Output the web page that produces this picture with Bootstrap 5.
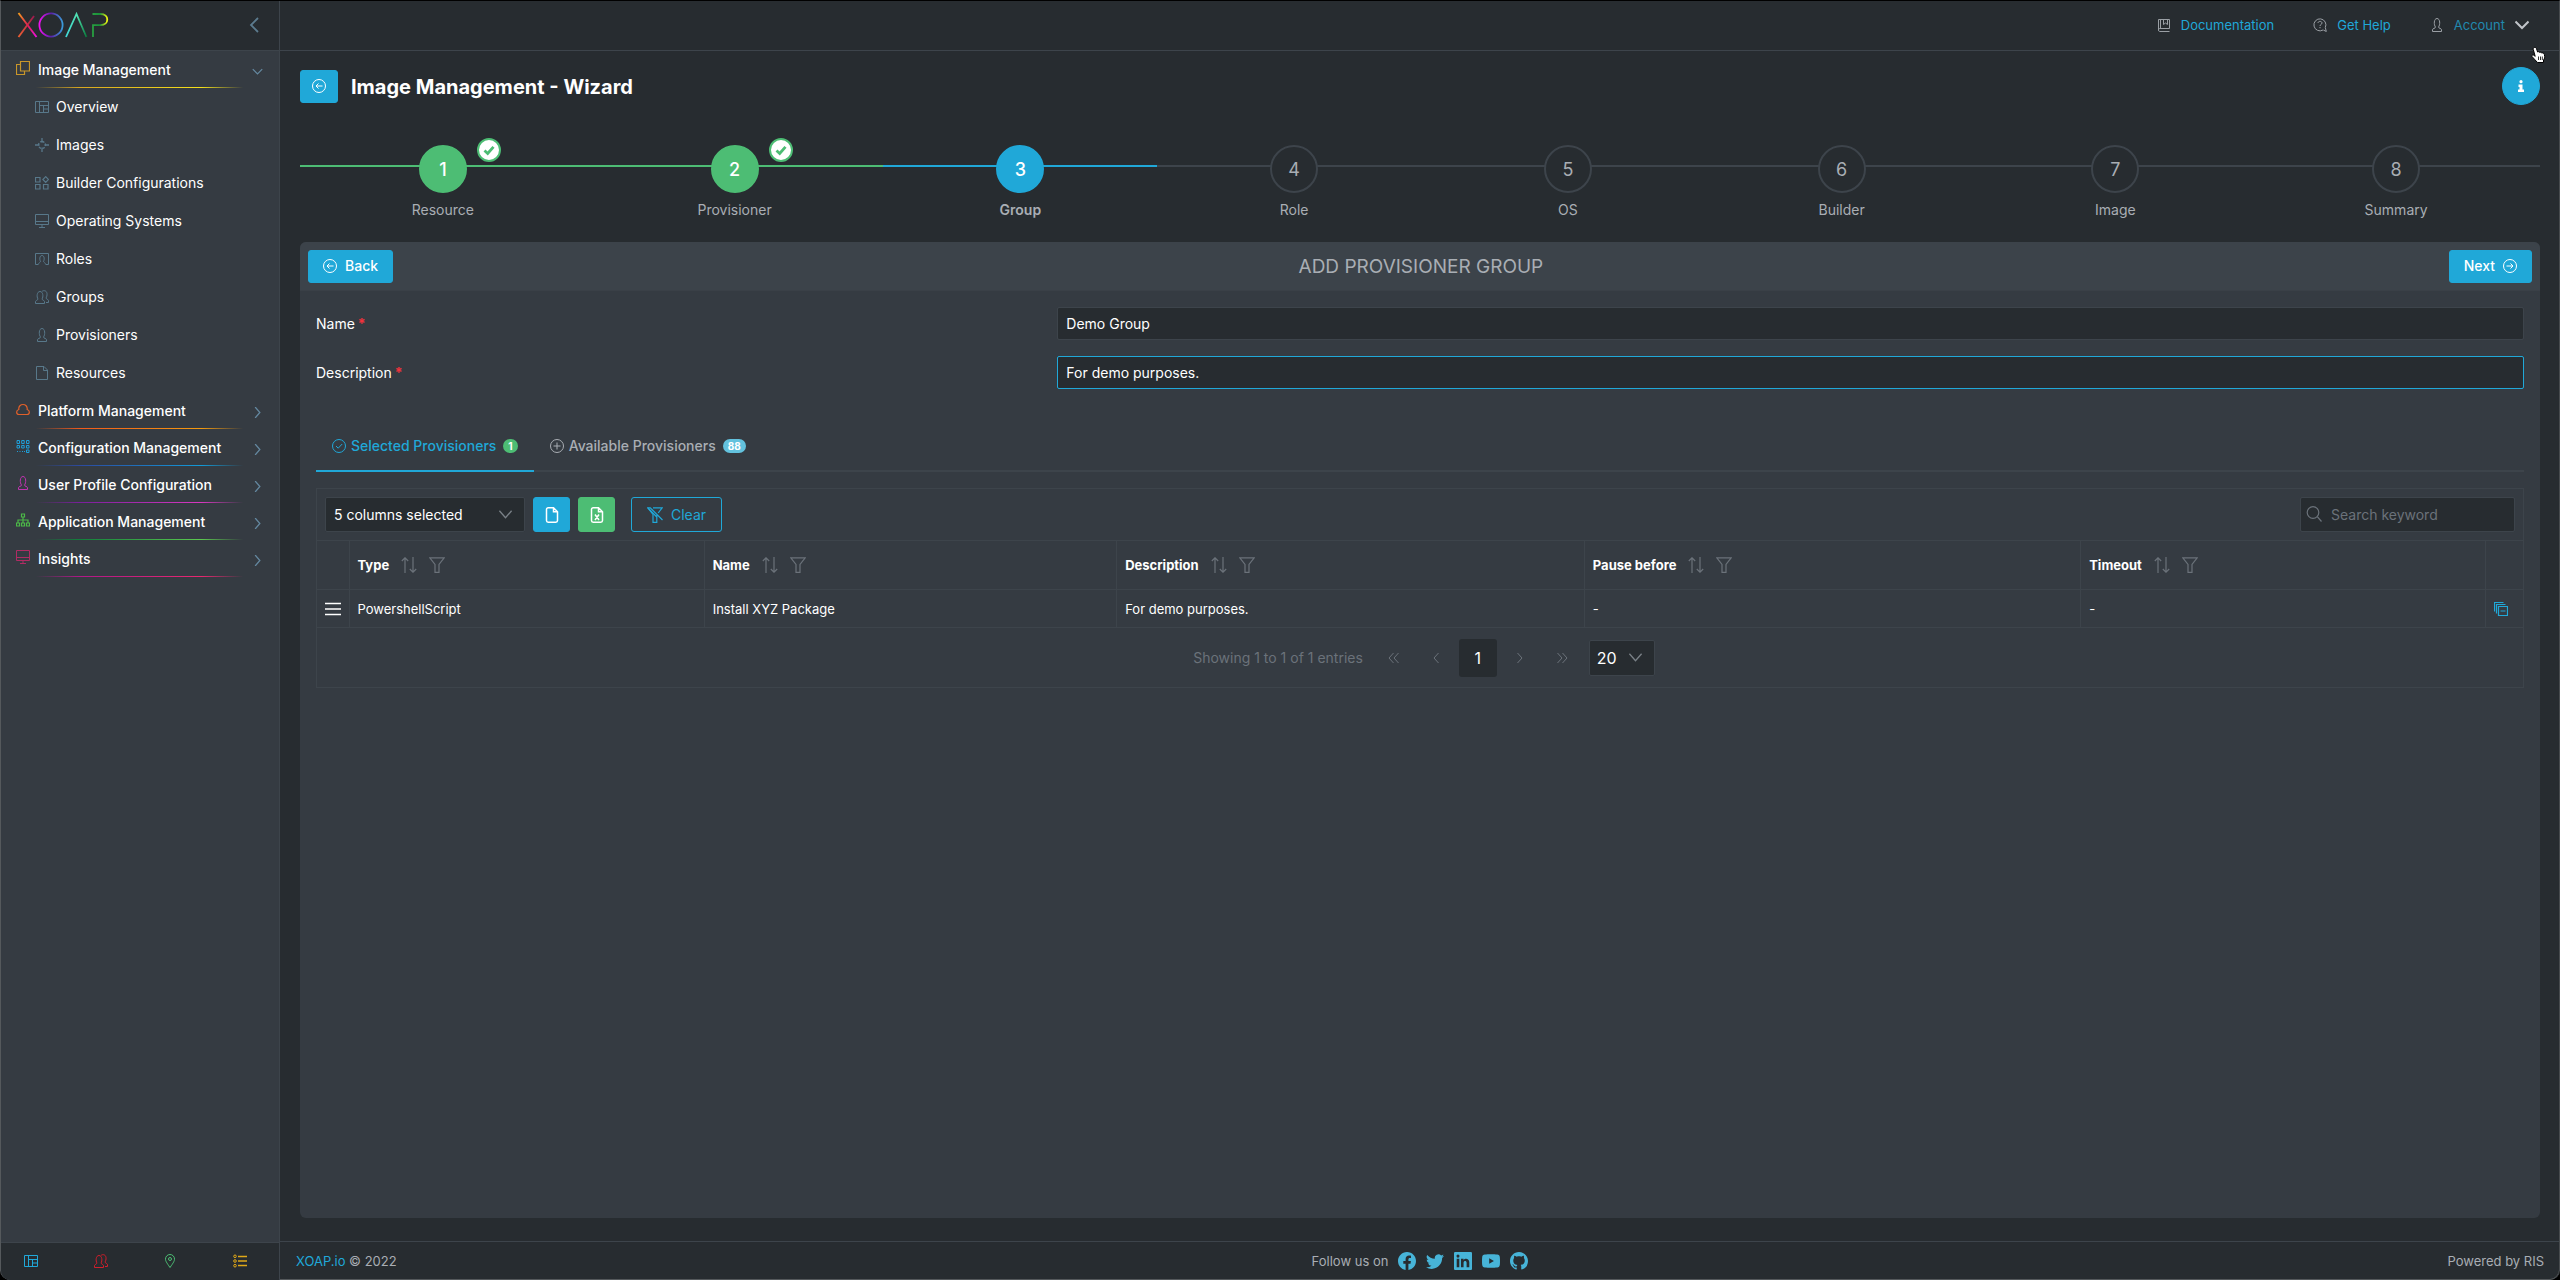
<!DOCTYPE html>
<html lang="en">
<head>
<meta charset="utf-8">
<meta name="viewport" content="width=device-width, initial-scale=1">
<title>Image Management - Wizard</title>
<link rel="stylesheet" href="https://cdn.jsdelivr.net/npm/bootstrap@5.3.0/dist/css/bootstrap.min.css">
<style>
:root{--page:#272c30;--panel:#353b42;--line:#3d444b;--accent:#20a8d8;--ok:#4dbd74;--muted:#a9aeb4;--dim:#6b727a;--navicon:#58788a}
body{background:#000;color:#fff;font-family:Inter,"Liberation Sans",sans-serif;font-size:14px;line-height:20px}
a{color:var(--accent);text-decoration:none}
svg{display:block;flex:none}
.glyph{width:14px;height:14px;fill:none;stroke:currentColor;stroke-width:1}
.glyph-lg{width:16px;height:16px;stroke-width:1.2}
.frame{min-height:100vh;background:var(--page);border-top:1px solid #000;border-left:1px solid #55595c;border-right:1px solid #474b4e;border-radius:0 0 10px 10px;box-shadow:inset 0 -1px 0 #55595c;overflow:hidden}
.side{width:279px;background:var(--panel);border-right:1px solid var(--line)}
.side-top,.topbar{height:50px;border-bottom:1px solid var(--line)}
.side-top{background:var(--page);padding:0 20px 2px 16px}
.side-toggle{color:#5c7b8e;background:none;border:0;padding:0}
.side-group{height:37px;padding:0 16px 0 15px;font-weight:500;color:#fff;position:relative}
.side-group::after{content:"";position:absolute;left:15px;right:16px;bottom:0;height:1px;background:linear-gradient(90deg,transparent,transparent 8%,var(--c1) 26%,var(--c2) 75%,transparent 92%)}
.side-group .glyph:first-child{margin:0 8px 3px 0}
.side-group .arrow{margin:3px 0 0 auto;color:#6488a0;width:11px;height:11px;stroke-width:1.6}
.side-link{height:38px;padding-left:34px;gap:7px;color:#fff}
.side-link .glyph{color:var(--navicon)}
.side-foot{height:38px;background:var(--page);border-top:1px solid var(--line);padding:0 32px 2px 23px}
.topbar{padding:0 30px 2px 0;gap:39px}
.topbar a{font-size:13px;gap:10px}
.topbar .glyph{color:#9a9fa4}
.content{padding:16px 19px 23px 20px}
.btn{--bs-btn-font-size:14px;--bs-btn-line-height:20px;--bs-btn-border-radius:3px;--bs-btn-font-weight:500}
.btn-accent{--bs-btn-color:#fff;--bs-btn-bg:var(--accent);--bs-btn-border-color:var(--accent);--bs-btn-hover-bg:#1b8eb7;--bs-btn-hover-color:#fff}
.btn-ok{--bs-btn-color:#fff;--bs-btn-bg:var(--ok);--bs-btn-border-color:var(--ok);--bs-btn-hover-bg:#3ea662;--bs-btn-hover-color:#fff}
.btn-line{--bs-btn-color:var(--accent);--bs-btn-border-color:var(--accent);--bs-btn-font-weight:400;--bs-btn-hover-color:#fff;--bs-btn-hover-bg:var(--accent);height:35px;padding:0 15px}
.btn-square{width:38px;height:33px;padding:0}
.btn-tool{width:37px;height:35px;padding:0}
.btn-step{height:33px;padding:0 14px}
.page-title{font-size:20px;line-height:24px;font-weight:700;margin:2px 0 0;padding-left:13px}
.info-btn{width:38px;height:38px;padding:0;border-radius:50%}
.stepper{margin:40px 0 23px;padding:0;list-style:none}
.stepper li{position:relative;flex:274 1 0;color:var(--muted);--track:var(--line)}
.stepper li:nth-child(1){flex-grow:286}
.stepper li:nth-child(2){flex-grow:298}
.stepper li:last-child{flex-grow:288}
.stepper li::before{content:"";position:absolute;left:0;right:0;top:20px;height:2px;background:var(--track)}
.step-dot{position:relative;width:48px;height:48px;padding-top:2px;border-radius:50%;border:2px solid var(--track);background:var(--page);font-size:18px}
.step-done{--track:var(--ok)!important}
.step-now{--track:var(--accent)!important;font-weight:600}
.step-done .step-dot,.step-now .step-dot{background:var(--track);color:#fff;font-weight:500}
.step-name{margin-top:8px;line-height:18px}
.step-check{position:absolute;left:calc(50% + 34px);top:-7px;width:24px;height:24px;border-radius:50%;background:#fff;border:2px solid var(--ok);color:var(--ok)}
.wizard{background:var(--panel);border-radius:6px;overflow:hidden}
.wizard-head{height:49px;padding:0 8px;background:#3c434a;border-bottom:1px solid #3a4047}
.wizard-head h2{font-size:19px;line-height:24px;font-weight:400;color:var(--muted);margin:2px 0 0}
.wizard-body{padding:16px}
.field-row{margin-bottom:16px}
.req{color:#f0323c;margin-left:3px;font-weight:700}
.form-control,.form-select,.form-control:focus{background-color:var(--page);color:#fff;border:1px solid var(--line);border-radius:2px;font-size:14px;line-height:20px;box-shadow:none}
.field-row .form-control{height:33px;padding:0 8px}
.field-row .is-current{border-color:var(--accent)}
.form-select{background-image:url("data:image/svg+xml,%3Csvg xmlns='http://www.w3.org/2000/svg' viewBox='0 0 16 16'%3E%3Cpath fill='none' stroke='%237a8187' stroke-width='1.4' d='M1.5 4 8 11.5 14.5 4'/%3E%3C/svg%3E")}
.tabs{margin-top:31px;border-bottom:2px solid var(--line)}
.tabs .nav-link{display:flex;align-items:center;gap:5px;height:52px;margin-bottom:-2px;padding:2px 16px 0;border:0;border-bottom:2px solid transparent;border-radius:0;color:var(--muted);font-weight:500;line-height:20px}
.tabs .nav-link.active{background:none;color:var(--accent);border-color:var(--accent)}
.tabs .badge{font-size:10px;line-height:14px;padding:0 5px;margin-left:2px}
.bg-ok{background:var(--ok)}
.bg-sky{background:#63c2de}
.grid-box{margin-top:16px;border:1px solid var(--line)}
.grid-tools{padding:8px}
.pick-cols{width:200px;height:35px;padding:0 8px;background-position:right 11px center;background-size:15px 15px}
.find-box{width:215px;height:35px}
.find-box svg{position:absolute;left:6px;top:9px;color:var(--dim)}
.find-box .form-control{height:35px;padding:0 8px 0 30px}
.find-box .form-control::placeholder{color:var(--dim)}
.grid-table{--bs-table-bg:transparent;--bs-table-color:#fff;table-layout:fixed;margin:0;font-size:13px;border-color:var(--line)}
.grid-table th,.grid-table td{padding:0 8px;vertical-align:middle;border:1px solid var(--line);line-height:18px}
.grid-table tr>:first-child{border-left:0}
.grid-table tr>:last-child{border-right:0}
.grid-table th{height:49px;font-weight:700}
.grid-table td{height:38px}
.grid-table th .glyph-lg{color:var(--dim)}
.c-handle{width:32px}.c-type{width:16.1%}.c-name{width:18.7%}.c-desc{width:21.2%}.c-pause{width:22.5%}.c-act{width:38px}
.pager{height:59px;padding-left:8px;color:var(--dim)}
.pager button{width:38px;height:38px;border:0;border-radius:3px;background:none;color:var(--dim);padding:0}
.pager .here{background:var(--page);color:#fff;font-size:16px}
.pick-size{width:66px;height:36px;padding:0 7px;font-size:16px!important;background-position:right 11px center;background-size:15px 15px}
.foot{height:39px;border-top:1px solid var(--line);padding:0 15px 0 16px;color:var(--muted);font-size:13px}
.follow,.social-list{gap:10px}
.social{width:18px;height:18px;fill:#47b4d8}
.pointer{position:absolute;right:13px;top:45px;z-index:5}
</style>
<script src="https://cdn.jsdelivr.net/npm/bootstrap@5.3.0/dist/js/bootstrap.bundle.min.js"></script>
</head>
<body>
<svg class="d-none" aria-hidden="true">
  <symbol id="i-copy" viewBox="0 0 14 14"><path d="M4.5.5h9v9.500h-9zM4.500 3.500h-4v10h8V10" stroke-width="1.200"/></symbol>
  <symbol id="i-board" viewBox="0 0 14 14"><path d="M.5 1.500h13v11H.5zM4.500 1.500v11M4.500 5.500h9M8.500 5.500v7M8.500 9h5"/></symbol>
  <symbol id="i-target" viewBox="0 0 14 14"><path d="M7 0v4.500M7 9.500V14M0 7h4.500M9.500 7H14" stroke-width="1.300"/><path stroke-width="1.300" stroke-dasharray="2.500 1.400" d="M7 3.500A3.500 3.500 0 1 1 7 10.500 3.500 3.500 0 1 1 7 3.500"/></symbol>
  <symbol id="i-blocks" viewBox="0 0 14 14"><path d="M.5 1.500h4.500V6H.5zM.5 8.500h4.500V13H.5zM8.500 8.500H13V13H8.500zM10.700.7l2.800 2.800-2.800 2.800-2.800-2.800z" stroke-width="1.200"/></symbol>
  <symbol id="i-screen" viewBox="0 0 14 14"><path d="M.5.500h13v10H.5zM.5 7.500h13M7 10.500v3M4 13.500h6"/></symbol>
  <symbol id="i-role" viewBox="0 0 14 14"><path d="M3 12.500H.5v-11h13v11H11M3.500 12.500c0-2 2-2 2-3.200C4.500 8 4.300 3.500 7 3.500s2.500 4.500 1.500 5.800c0 1.200 2 1.200 2 3.200"/></symbol>
  <symbol id="i-group" viewBox="0 0 14 14"><path d="M.5 13.500v-2c0-1 2.500-1.500 2.500-2.500C1.500 7 1.800 1.500 5 1.500S8.500 7 7 9c0 1 2.500 1.500 2.500 2.500v2zM7 1.500C8 .3 11.500 0 12 3.500c.2 2-.3 3.500-1 4.500 0 1 2.500 1.500 2.500 2.500v2H11"/></symbol>
  <symbol id="i-person" viewBox="0 0 14 14"><path d="M2.500 13.500v-2c0-1 3-1 3-2.500C3.700 7 3.700.5 7 .5S10.300 7 8.500 9c0 1.500 3 1.500 3 2.500v2z"/></symbol>
  <symbol id="i-file" viewBox="0 0 14 14"><path d="M1.500.5h7.500l3.500 3.500v9.500h-11zM8.500.5v4h4"/></symbol>
  <symbol id="i-cloud" viewBox="0 0 14 14"><path d="M3 12.500C.2 12.500-.3 8.500 2.800 7.500 2 .8 12 .8 11.200 7.500c3.100 1 2.600 5-.2 5z" stroke-width="1.200"/></symbol>
  <symbol id="i-dots" viewBox="0 0 14 14"><path d="M1 1.500h2.500v3H1zM5.700 1.500h2.500v3H5.700zM10.500 1.500H13v3h-2.500zM1 6.500h2.500v2.500H1zM5.700 6.500h2.500v2.500H5.700zM10.500 6.500H13v2.500h-2.500zM10.500 11H13v2.500h-2.500zM1 12.500h1M3.500 12.500h1M6 12.500h1M8 12.500h1"/></symbol>
  <symbol id="i-tree" viewBox="0 0 14 14"><path d="M5.500 1h3v3h-3zM.5 10h3v3h-3zM5.500 10h3v3h-3zM10.500 10h3v3h-3zM7 4v6M2 10V7h10v3" stroke-width="1.200"/></symbol>
  <symbol id="i-pin" viewBox="0 0 14 14"><path d="M7 13.500C3.500 8.500 2.500 7 2.500 5a4.500 4.500 0 0 1 9 0c0 2-1 3.500-4.500 8.500z"/><circle cx="7" cy="5" r="1.500"/></symbol>
  <symbol id="i-list" viewBox="0 0 14 14"><path d="M5 2.500h9M5 7h9M5 11.500h9" stroke-width="1.600"/><circle cx="2" cy="2.300" r="1.300"/><circle cx="2" cy="7" r="1.300"/><circle cx="2" cy="11.700" r="1.300"/></symbol>
  <symbol id="i-down" viewBox="0 0 14 14"><path d="M1 4l6 6 6-6"/></symbol>
  <symbol id="i-right" viewBox="0 0 14 14"><path d="M4 0l6 7-6 7"/></symbol>
  <symbol id="i-book" viewBox="0 0 14 14"><path d="M1.500 12V1.500h11v9h-10c-1.300 0-1.300 3 0 3h10M3.500 1.500v9M6.500 1.500v5L8.500 5l2 1.500v-5"/></symbol>
  <symbol id="i-help" viewBox="0 0 14 14"><path d="M10 12A6 6 0 1 1 12.300 9.500l1 4-3-1.500M5 5c0-2.200 4-2.200 4 0 0 1.500-2 1.300-2 3M7 9v1.200"/></symbol>
  <symbol id="i-left-circle" viewBox="0 0 14 14"><circle cx="7" cy="7" r="6.500"/><path d="M10.500 7H4M6.500 4.500 4 7l2.500 2.500"/></symbol>
  <symbol id="i-right-circle" viewBox="0 0 14 14"><circle cx="7" cy="7" r="6.500"/><path d="M3.500 7H10M7.500 4.500 10 7 7.500 9.500"/></symbol>
  <symbol id="i-check-circle" viewBox="0 0 14 14"><circle cx="7" cy="7" r="6.500"/><path d="M4 7l2.200 2.200L10.200 5"/></symbol>
  <symbol id="i-plus-circle" viewBox="0 0 14 14"><circle cx="7" cy="7" r="6.500"/><path d="M7 3.500v7M3.500 7h7"/></symbol>
  <symbol id="i-sheet" viewBox="0 0 16 16"><path d="M4.200.8h5.300l4 4v8.700a1.700 1.700 0 0 1-1.700 1.700H4.200a1.700 1.700 0 0 1-1.700-1.700v-11A1.700 1.700 0 0 1 4.200.8zM9.500.8v4h4" stroke-width="1.500"/></symbol>
  <symbol id="i-sheet-x" viewBox="0 0 16 16"><path d="M4.200.8h5.300l4 4v8.700a1.700 1.700 0 0 1-1.700 1.700H4.200a1.700 1.700 0 0 1-1.700-1.700v-11A1.700 1.700 0 0 1 4.200.8zM9.500.8v4h4M6 7.500l4 5.500M10 7.500 6 13" stroke-width="1.500"/></symbol>
  <symbol id="i-filter" viewBox="0 0 16 16"><path d="M.8.8h14.400L10 7.500v7.800H6V7.500z"/></symbol>
  <symbol id="i-nofilter" viewBox="0 0 16 16"><path d="M6 .8h9.200L11.200 6M9.800 8v7.300H6V7.500L.8.800h2.500L15.500 13"/><path d="M.8.8 9.800 10"/></symbol>
  <symbol id="i-sort" viewBox="0 0 16 16"><path d="M4 16V.8M.8 4 4 .8 7.200 4M12 0v15.200M8.800 12l3.200 3.200 3.200-3.200"/></symbol>
  <symbol id="i-search" viewBox="0 0 16 16"><circle cx="7" cy="6.500" r="5.800"/><path d="m11.300 10.700 4.200 4.800"/></symbol>
  <symbol id="i-bars" viewBox="0 0 16 16"><path d="M0 2.500h16M0 8h16M0 13.500h16" stroke-width="1.600"/></symbol>
  <symbol id="i-remove" viewBox="0 0 14 14"><path d="M4.500 4.500h9v9h-9zM2.500 11.500v-9h9M.5 9.500v-9h9M6.500 9h5" stroke-width="1.200"/></symbol>
  <symbol id="i-first" viewBox="0 0 14 14"><path d="M6.500 2 2 7l4.500 5M11.500 2 7 7l4.500 5"/></symbol>
  <symbol id="i-prev" viewBox="0 0 14 14"><path d="M9.500 2 5 7l4.500 5"/></symbol>
  <symbol id="i-next" viewBox="0 0 14 14"><path d="M4.500 2 9 7l-4.500 5"/></symbol>
  <symbol id="i-last" viewBox="0 0 14 14"><path d="M2.500 2 7 7l-4.500 5M7.500 2l4.500 5-4.500 5"/></symbol>
  <symbol id="i-tick" viewBox="0 0 14 14"><path d="M2.500 7.500 5.700 10.500 11.500 3.800" stroke-width="2.800"/></symbol>
</svg>
<div class="frame d-flex position-relative">
  <aside class="side d-flex flex-column flex-shrink-0">
    <div class="side-top d-flex align-items-center justify-content-between">
      <a href="#" aria-label="XOAP">
        <svg width="94" height="26" viewBox="0 0 94 26" fill="none" stroke-width="1.800">
          <defs>
            <linearGradient id="gx" gradientUnits="userSpaceOnUse" x1="1" y1="1" x2="19" y2="25"><stop stop-color="#f6a21c"/><stop offset=".5" stop-color="#e02050"/><stop offset="1" stop-color="#f010e0"/></linearGradient>
            <linearGradient id="gx2" gradientUnits="userSpaceOnUse" x1="17" y1="4" x2="1" y2="25"><stop stop-color="#a01850"/><stop offset="1" stop-color="#f06030"/></linearGradient>
            <linearGradient id="go"><stop stop-color="#f010f0"/><stop offset=".5" stop-color="#5a20a8"/><stop offset="1" stop-color="#3a9ad8"/></linearGradient>
            <linearGradient id="ga"><stop stop-color="#40d8d8"/><stop offset=".55" stop-color="#50e0b0"/><stop offset="1" stop-color="#08783a"/></linearGradient>
            <linearGradient id="gp"><stop stop-color="#28a040"/><stop offset=".5" stop-color="#18903a"/><stop offset="1" stop-color="#f0f810"/></linearGradient>
          </defs>
          <path stroke="url(#gx2)" d="M17 4 1.500 25"/><path stroke="url(#gx)" d="M1.500 1 19.500 25"/>
          <circle cx="34" cy="13" r="11.600" stroke="url(#go)"/>
          <path stroke="url(#ga)" d="M49 25 59.500 2l10 23"/>
          <path stroke="url(#gp)" d="M75.500 2h8c9 0 9 11 0 11.100h-7.500V25"/>
        </svg>
      </a>
      <button class="side-toggle" type="button" aria-label="Collapse sidebar"><svg width="10" height="16" viewBox="0 0 10 16" fill="none" stroke="currentColor" stroke-width="1.800"><path d="M9 1 2 8l7 7"/></svg></button>
    </div>
    <nav>
      <a href="#" class="side-group d-flex align-items-center" style="--c1:#d8a820;--c2:#f4e01c"><svg class="glyph" color="#c8962a"><use href="#i-copy"/></svg>Image Management<svg class="glyph arrow"><use href="#i-down"/></svg></a>
      <a href="#" class="side-link d-flex align-items-center"><svg class="glyph"><use href="#i-board"/></svg>Overview</a>
      <a href="#" class="side-link d-flex align-items-center"><svg class="glyph"><use href="#i-target"/></svg>Images</a>
      <a href="#" class="side-link d-flex align-items-center"><svg class="glyph"><use href="#i-blocks"/></svg>Builder Configurations</a>
      <a href="#" class="side-link d-flex align-items-center"><svg class="glyph"><use href="#i-screen"/></svg>Operating Systems</a>
      <a href="#" class="side-link d-flex align-items-center"><svg class="glyph"><use href="#i-role"/></svg>Roles</a>
      <a href="#" class="side-link d-flex align-items-center"><svg class="glyph"><use href="#i-group"/></svg>Groups</a>
      <a href="#" class="side-link d-flex align-items-center"><svg class="glyph"><use href="#i-person"/></svg>Provisioners</a>
      <a href="#" class="side-link d-flex align-items-center"><svg class="glyph"><use href="#i-file"/></svg>Resources</a>
      <a href="#" class="side-group d-flex align-items-center" style="--c1:#f05a1c;--c2:#f39a10"><svg class="glyph" color="#e0602a"><use href="#i-cloud"/></svg>Platform Management<svg class="glyph arrow"><use href="#i-right"/></svg></a>
      <a href="#" class="side-group d-flex align-items-center" style="--c1:#2c4aa0;--c2:#129ad8"><svg class="glyph" color="#1f9fd8"><use href="#i-dots"/></svg>Configuration Management<svg class="glyph arrow"><use href="#i-right"/></svg></a>
      <a href="#" class="side-group d-flex align-items-center" style="--c1:#7a1f9c;--c2:#d838c0"><svg class="glyph" color="#c034b0"><use href="#i-person"/></svg>User Profile Configuration<svg class="glyph arrow"><use href="#i-right"/></svg></a>
      <a href="#" class="side-group d-flex align-items-center" style="--c1:#12803c;--c2:#5cc850"><svg class="glyph" color="#4cb848"><use href="#i-tree"/></svg>Application Management<svg class="glyph arrow"><use href="#i-right"/></svg></a>
      <a href="#" class="side-group d-flex align-items-center" style="--c1:#b01888;--c2:#e82870"><svg class="glyph" color="#b02c64"><use href="#i-screen"/></svg>Insights<svg class="glyph arrow"><use href="#i-right"/></svg></a>
    </nav>
    <div class="side-foot mt-auto d-flex align-items-center justify-content-between">
      <a href="#" aria-label="Dashboard"><svg class="glyph" color="#20a8d8"><use href="#i-board"/></svg></a>
      <a href="#" aria-label="Users"><svg class="glyph" color="#d01f2c"><use href="#i-group"/></svg></a>
      <a href="#" aria-label="Locations"><svg class="glyph" color="#4dbd74"><use href="#i-pin"/></svg></a>
      <a href="#" aria-label="Tasks"><svg class="glyph" color="#e0a818"><use href="#i-list"/></svg></a>
    </div>
  </aside>
  <div class="flex-grow-1 d-flex flex-column">
    <header class="topbar d-flex align-items-center justify-content-end">
      <a href="#" class="d-flex align-items-center"><svg class="glyph"><use href="#i-book"/></svg>Documentation</a>
      <a href="#" class="d-flex align-items-center"><svg class="glyph"><use href="#i-help"/></svg>Get Help</a>
      <a href="#" class="d-flex align-items-center"><svg class="glyph"><use href="#i-person"/></svg><span class="opacity-75">Account</span><svg class="glyph"><path d="M.5 3.500 7 10l6.500-6.500" stroke="#c0c4c8" stroke-width="2"/></svg></a>
    </header>
    <main class="content flex-grow-1 d-flex flex-column">
      <div class="d-flex align-items-center">
        <button class="btn btn-accent btn-square d-flex align-items-center justify-content-center" type="button" aria-label="Go back"><svg class="glyph"><use href="#i-left-circle"/></svg></button>
        <h1 class="page-title">Image Management - Wizard</h1>
        <button class="btn btn-accent info-btn ms-auto d-flex align-items-center justify-content-center" type="button" aria-label="Information"><svg width="8" height="12" viewBox="0 0 8 12" fill="#fff"><circle cx="4" cy="1.700" r="1.600"/><path d="M1.500 4.500h4v5H7V12H1V9.500h1.500V7h-1z"/></svg></button>
      </div>
      <ol class="stepper d-flex">
        <li class="step-done d-flex flex-column align-items-center"><span class="step-dot d-flex align-items-center justify-content-center">1</span><span class="step-name">Resource</span><span class="step-check d-flex align-items-center justify-content-center"><svg class="glyph"><use href="#i-tick"/></svg></span></li>
        <li class="step-done d-flex flex-column align-items-center"><span class="step-dot d-flex align-items-center justify-content-center">2</span><span class="step-name">Provisioner</span><span class="step-check d-flex align-items-center justify-content-center"><svg class="glyph"><use href="#i-tick"/></svg></span></li>
        <li class="step-now d-flex flex-column align-items-center"><span class="step-dot d-flex align-items-center justify-content-center">3</span><span class="step-name">Group</span></li>
        <li class="d-flex flex-column align-items-center"><span class="step-dot d-flex align-items-center justify-content-center">4</span><span class="step-name">Role</span></li>
        <li class="d-flex flex-column align-items-center"><span class="step-dot d-flex align-items-center justify-content-center">5</span><span class="step-name">OS</span></li>
        <li class="d-flex flex-column align-items-center"><span class="step-dot d-flex align-items-center justify-content-center">6</span><span class="step-name">Builder</span></li>
        <li class="d-flex flex-column align-items-center"><span class="step-dot d-flex align-items-center justify-content-center">7</span><span class="step-name">Image</span></li>
        <li class="d-flex flex-column align-items-center"><span class="step-dot d-flex align-items-center justify-content-center">8</span><span class="step-name">Summary</span></li>
      </ol>
      <section class="wizard flex-grow-1">
        <div class="wizard-head d-flex align-items-center justify-content-between">
          <button class="btn btn-accent btn-step d-flex align-items-center gap-2" type="button"><svg class="glyph"><use href="#i-left-circle"/></svg>Back</button>
          <h2>ADD PROVISIONER GROUP</h2>
          <button class="btn btn-accent btn-step d-flex align-items-center gap-2" type="button">Next<svg class="glyph"><use href="#i-right-circle"/></svg></button>
        </div>
        <div class="wizard-body">
          <form>
            <div class="row gx-3 field-row align-items-center">
              <label class="col-4" for="group-name">Name<span class="req">*</span></label>
              <div class="col-8"><input class="form-control" id="group-name" type="text" value="Demo Group"></div>
            </div>
            <div class="row gx-3 field-row align-items-center mb-0">
              <label class="col-4" for="group-desc">Description<span class="req">*</span></label>
              <div class="col-8"><input class="form-control is-current" id="group-desc" type="text" value="For demo purposes."></div>
            </div>
          </form>
          <div class="nav nav-tabs tabs" role="tablist">
            <button class="nav-link active" type="button" role="tab" aria-selected="true"><svg class="glyph"><use href="#i-check-circle"/></svg>Selected Provisioners<span class="badge rounded-pill bg-ok">1</span></button>
            <button class="nav-link" type="button" role="tab" aria-selected="false"><svg class="glyph"><use href="#i-plus-circle"/></svg>Available Provisioners<span class="badge rounded-pill bg-sky">88</span></button>
          </div>
          <div class="grid-box">
            <div class="grid-tools d-flex align-items-center gap-2">
              <select class="form-select pick-cols" aria-label="Columns"><option>5 columns selected</option></select>
              <button class="btn btn-accent btn-tool d-flex align-items-center justify-content-center" type="button" aria-label="Export CSV"><svg class="glyph glyph-lg"><use href="#i-sheet"/></svg></button>
              <button class="btn btn-ok btn-tool d-flex align-items-center justify-content-center" type="button" aria-label="Export Excel"><svg class="glyph glyph-lg"><use href="#i-sheet-x"/></svg></button>
              <button class="btn btn-line ms-2 d-flex align-items-center gap-2" type="button"><svg class="glyph glyph-lg"><use href="#i-nofilter"/></svg>Clear</button>
              <div class="find-box position-relative ms-auto"><svg class="glyph glyph-lg"><use href="#i-search"/></svg><input class="form-control" type="search" placeholder="Search keyword" aria-label="Search keyword"></div>
            </div>
            <table class="table grid-table">
              <colgroup><col class="c-handle"><col class="c-type"><col class="c-name"><col class="c-desc"><col class="c-pause"><col><col class="c-act"></colgroup>
              <thead><tr>
                <th></th>
                <th><div class="d-flex align-items-center gap-2">Type<svg class="glyph glyph-lg ms-1"><use href="#i-sort"/></svg><svg class="glyph glyph-lg ms-1"><use href="#i-filter"/></svg></div></th>
                <th><div class="d-flex align-items-center gap-2">Name<svg class="glyph glyph-lg ms-1"><use href="#i-sort"/></svg><svg class="glyph glyph-lg ms-1"><use href="#i-filter"/></svg></div></th>
                <th><div class="d-flex align-items-center gap-2">Description<svg class="glyph glyph-lg ms-1"><use href="#i-sort"/></svg><svg class="glyph glyph-lg ms-1"><use href="#i-filter"/></svg></div></th>
                <th><div class="d-flex align-items-center gap-2">Pause before<svg class="glyph glyph-lg ms-1"><use href="#i-sort"/></svg><svg class="glyph glyph-lg ms-1"><use href="#i-filter"/></svg></div></th>
                <th><div class="d-flex align-items-center gap-2">Timeout<svg class="glyph glyph-lg ms-1"><use href="#i-sort"/></svg><svg class="glyph glyph-lg ms-1"><use href="#i-filter"/></svg></div></th>
                <th></th>
              </tr></thead>
              <tbody><tr>
                <td><svg class="glyph glyph-lg"><use href="#i-bars"/></svg></td>
                <td>PowershellScript</td><td>Install XYZ Package</td><td>For demo purposes.</td><td>-</td><td>-</td>
                <td><a href="#" aria-label="Remove"><svg class="glyph"><use href="#i-remove"/></svg></a></td>
              </tr></tbody>
            </table>
            <div class="pager d-flex align-items-center justify-content-center gap-1">
              <span class="me-2">Showing 1 to 1 of 1 entries</span>
              <button type="button" aria-label="First page"><svg class="glyph mx-auto"><use href="#i-first"/></svg></button>
              <button type="button" aria-label="Previous page"><svg class="glyph mx-auto"><use href="#i-prev"/></svg></button>
              <button type="button" class="here">1</button>
              <button type="button" aria-label="Next page"><svg class="glyph mx-auto"><use href="#i-next"/></svg></button>
              <button type="button" aria-label="Last page"><svg class="glyph mx-auto"><use href="#i-last"/></svg></button>
              <select class="form-select pick-size ms-1" aria-label="Rows per page"><option>20</option></select>
            </div>
          </div>
        </div>
      </section>
    </main>
    <footer class="foot d-flex align-items-center">
      <div class="col"><a href="#">XOAP.io</a> © 2022</div>
      <div class="follow d-flex align-items-center">
        <span>Follow us on</span>
        <div class="social-list d-flex">
        <a href="#" aria-label="Facebook"><svg class="social" viewBox="0 0 16 16"><path d="M16 8.049c0-4.446-3.582-8.050-8-8.050C3.580 0-.002 3.603-.002 8.050c0 4.017 2.926 7.347 6.750 7.951v-5.625h-2.030V8.050H6.750V6.275c0-2.017 1.195-3.131 3.022-3.131.876 0 1.791.157 1.791.157v1.980h-1.009c-.993 0-1.303.621-1.303 1.258v1.510h2.218l-.354 2.326H9.250V16c3.824-.604 6.750-3.934 6.750-7.951z"/></svg></a>
        <a href="#" aria-label="Twitter"><svg class="social" viewBox="0 0 16 16"><path d="M5.026 15c6.038 0 9.341-5.003 9.341-9.334 0-.140 0-.282-.006-.422A6.685 6.685 0 0 0 16 3.542a6.658 6.658 0 0 1-1.889.518 3.301 3.301 0 0 0 1.447-1.817 6.533 6.533 0 0 1-2.087.793A3.286 3.286 0 0 0 7.875 6.030a9.325 9.325 0 0 1-6.767-3.429 3.289 3.289 0 0 0 1.018 4.382A3.323 3.323 0 0 1 .640 6.575v.045a3.288 3.288 0 0 0 2.632 3.218 3.203 3.203 0 0 1-.865.115 3.230 3.230 0 0 1-.614-.057 3.283 3.283 0 0 0 3.067 2.277A6.588 6.588 0 0 1 .780 13.580a6.320 6.320 0 0 1-.780-.045A9.344 9.344 0 0 0 5.026 15z"/></svg></a>
        <a href="#" aria-label="LinkedIn"><svg class="social" viewBox="0 0 16 16"><path fill-rule="evenodd" d="M1 0h14a1 1 0 0 1 1 1v14a1 1 0 0 1-1 1H1a1 1 0 0 1-1-1V1a1 1 0 0 1 1-1zM2.400 6.100h2.300v7.500H2.400zM3.550 2.300a1.350 1.350 0 1 0 0 2.700 1.350 1.350 0 0 0 0-2.700zM6.200 6.100v7.500h2.300V9.800c0-2.300 2.700-2.300 2.700-.1v3.900h2.400V9.300c0-3.800-3.900-4-5.100-2.100V6.100z"/></svg></a>
        <a href="#" aria-label="YouTube"><svg class="social" viewBox="0 0 16 16"><path fill-rule="evenodd" d="M2.500 2.300C5 2 11 2 13.500 2.300 15 2.500 15.700 3.200 15.850 4.700c.2 2 .2 4.600 0 6.600-.15 1.500-.85 2.200-2.350 2.400-2.500.3-8.500.3-11 0C1 13.500.3 12.800.150 11.300c-.2-2-.2-4.600 0-6.600C.3 3.200 1 2.500 2.500 2.300zM6.400 5.500v5L10.600 8z"/></svg></a>
        <a href="#" aria-label="GitHub"><svg class="social" viewBox="0 0 16 16"><path d="M8 0C3.580 0 0 3.580 0 8c0 3.540 2.290 6.530 5.470 7.590.400.070.550-.170.550-.380 0-.190-.010-.820-.010-1.490-2.010.370-2.530-.490-2.690-.940-.090-.230-.480-.940-.820-1.130-.280-.150-.680-.520-.010-.530.630-.010 1.080.580 1.230.820.720 1.210 1.870.870 2.330.660.070-.520.280-.870.510-1.070-1.780-.200-3.640-.890-3.640-3.950 0-.870.310-1.590.820-2.150-.080-.200-.360-1.020.080-2.120 0 0 .670-.210 2.200.820.640-.180 1.320-.270 2-.270.680 0 1.360.090 2 .270 1.530-1.040 2.200-.820 2.200-.820.440 1.100.160 1.920.080 2.120.510.560.820 1.270.820 2.150 0 3.070-1.870 3.750-3.650 3.950.290.250.540.730.540 1.480 0 1.070-.010 1.930-.010 2.200 0 .210.150.460.550.380A8.012 8.012 0 0 0 16 8c0-4.420-3.580-8-8-8z"/></svg></a>
        </div>
      </div>
      <div class="col text-end">Powered by RIS</div>
    </footer>
  </div>
  <svg class="pointer" width="15" height="18" viewBox="0 0 15 18" fill="#fff" stroke="#000" stroke-width="1"><path d="M3.200 1.500c1.200-.6 2 .3 2.400 1.500l1 3c1-.6 1.700-.2 2 .4 1-.5 1.700 0 2 .6 1.200-.4 2.400.3 2.800 1.600.6 3 .2 4-.9 5.400v2.500H6.500C5 14.500 2.500 12.500 1 10.500c-.6-1.200 1-2 2.300-.9l.9.800L2.300 3.500c-.2-.9 0-1.700.9-2z"/><path d="M7.500 10.500v3.500M9.500 10.500v3.500M11.300 10.500v3.500" stroke-width=".8"/></svg>
</div>
</body>
</html>
